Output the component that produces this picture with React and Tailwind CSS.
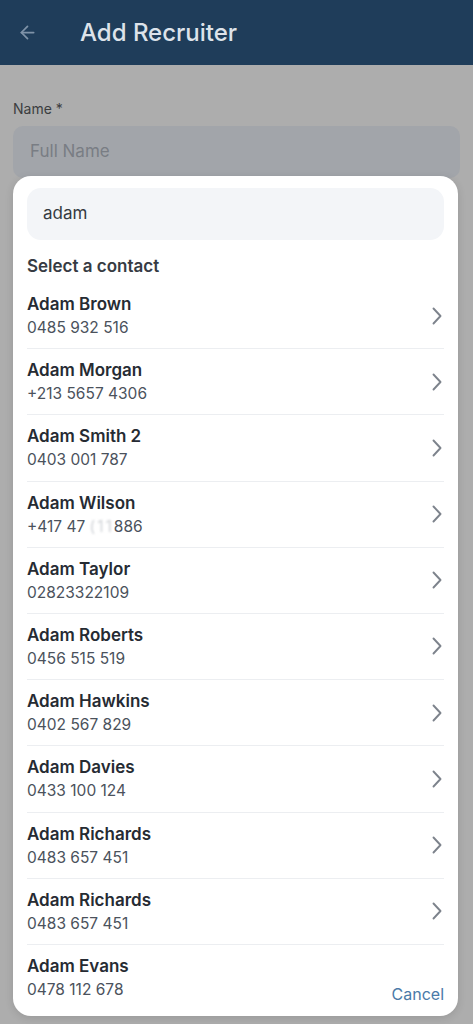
import { ArrowLeft } from 'lucide-react';

const contacts = [
  { name: 'Adam Brown', phone: '0485 932 516' },
  { name: 'Adam Morgan', phone: '+213 5657 4306' },
  { name: 'Adam Smith 2', phone: '0403 001 787' },
  { name: 'Adam Wilson', phone: '+417 47 ', masked: '(11', rest: '886' },
  { name: 'Adam Taylor', phone: '02823322109' },
  { name: 'Adam Roberts', phone: '0456 515 519' },
  { name: 'Adam Hawkins', phone: '0402 567 829' },
  { name: 'Adam Davies', phone: '0433 100 124' },
  { name: 'Adam Richards', phone: '0483 657 451' },
  { name: 'Adam Richards', phone: '0483 657 451' },
  { name: 'Adam Evans', phone: '0478 112 678', last: true },
];

function Chevron() {
  return (
    <svg width="12" height="18" viewBox="0 0 12 18" fill="none" className="shrink-0">
      <path d="M2.5 1.5 L9.5 9 L2.5 16.5" stroke="#7d838c" strokeWidth="1.9" strokeLinecap="round" strokeLinejoin="round" />
    </svg>
  );
}

function ContactRow({ c }) {
  return (
    <div className={`flex items-center justify-between pt-[10px] pb-[10.2px] ${c.last ? '' : 'border-b border-[#eceef1]'}`}>
      <div className="flex flex-col">
        <span className="text-[17px] leading-[22px] font-semibold text-[#262b33]">{c.name}</span>
        <span className="mt-[2px] text-[15.5px] leading-[21px] text-[#4b525c]">
          {c.phone}
          {c.masked && <span className="tracking-[2px] text-[#cfd2d6] blur-[1px]">{c.masked}</span>}
          {c.rest}
        </span>
      </div>
      {!c.last && <div className="pr-[1px]"><Chevron /></div>}
    </div>
  );
}

export default function App() {
  return (
    <div className="relative h-[1024px] w-full overflow-hidden bg-[#adadad]" style={{ fontFamily: 'Inter, "Noto Sans", sans-serif' }}>
      {/* Header (dimmed by the sheet backdrop) */}
      <header className="flex h-[65px] items-center bg-[#1f3d5a] pl-[17px]">
        <ArrowLeft size={21} strokeWidth={2} className="text-[#7f93a8]" />
        <h1 className="ml-[42px] text-[24px] font-medium text-[#dde3ea]">Add Recruiter</h1>
      </header>

      {/* Form behind */}
      <div className="px-[13px] pt-[35px]">
        <label className="block text-[14px] leading-[18px] text-[#3b3d40]">Name *</label>
        <div className="mt-[8px] flex h-[52px] items-center rounded-[10px] bg-[#a2a5aa] px-[17px]">
          <span className="text-[17px] text-[#797d84]">Full Name</span>
        </div>
      </div>

      {/* Contact picker sheet */}
      <div className="absolute left-[13px] right-[15px] top-[176px] flex h-[840px] flex-col overflow-hidden rounded-[18px] bg-white shadow-[0_2px_8px_rgba(0,0,0,0.12)]">
        <div className="px-[14px] pt-[12px]">
          <div className="flex h-[52px] items-center rounded-[14px] bg-[#f3f5f8] px-[16px]">
            <span className="text-[17px] text-[#353a42]">adam</span>
          </div>
          <h2 className="mt-[15px] text-[17px] leading-[22px] font-semibold text-[#363b43]">Select a contact</h2>
        </div>
        <div className="mt-[6px] flex-1 overflow-hidden px-[14px]">
          {contacts.map((c, i) => (
            <ContactRow key={i} c={c} />
          ))}
        </div>
        <button className="absolute bottom-[10px] right-[14px] text-[16px] text-[#4a7aa8]">Cancel</button>
      </div>
    </div>
  );
}
